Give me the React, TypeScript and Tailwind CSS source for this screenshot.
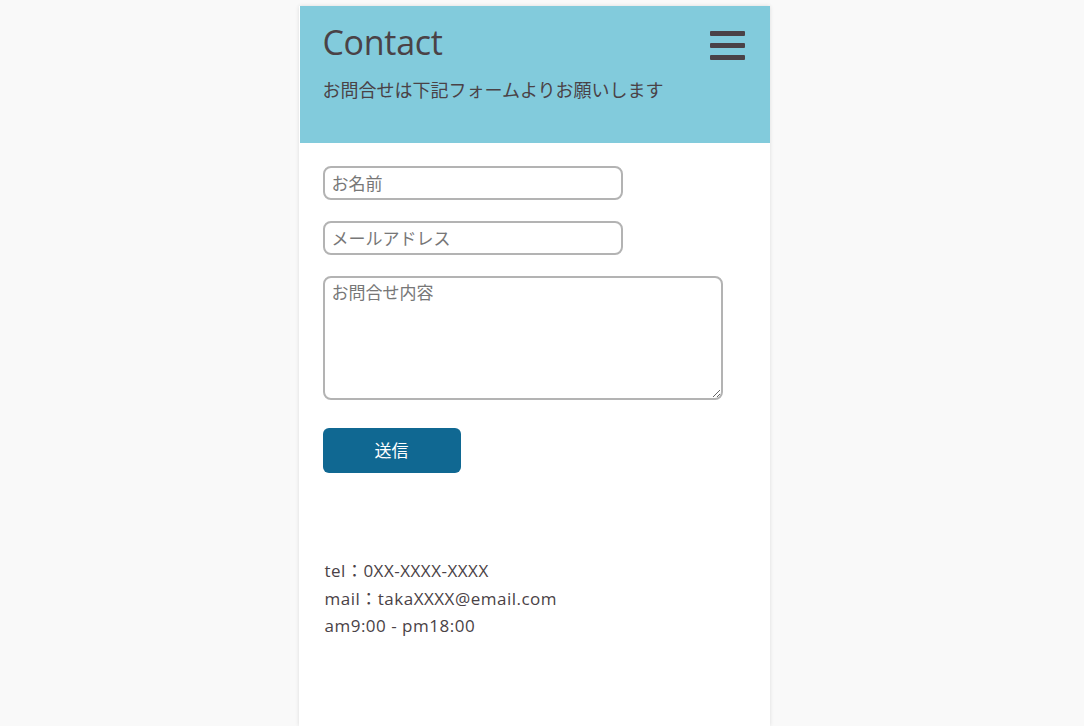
export default function App() {
  const font = { fontFamily: '"Open Sans", "Noto Sans CJK JP", sans-serif' };
  return (
    <div className="min-h-[726px] w-full bg-[#f9f9f9] pt-[6px]" style={font}>
      <div className="mx-auto flex min-h-[720px] w-[471px] translate-x-[-8px] flex-col bg-white pl-[1px] shadow-[0_0_4px_rgba(0,0,0,0.12)]">
        <header className="flex h-[137px] justify-between bg-[#82cbdc] pl-[23px] pr-[25px] text-[#4a4246]">
          <div>
            <h1 className="mt-[14px] text-[34px] leading-[44px] tracking-[-0.3px]">Contact</h1>
            <p className="mt-[13px] text-[18px] leading-[24px]" style={{ fontFamily: '"Noto Sans CJK JP", sans-serif' }}>
              お問合せは下記フォームよりお願いします
            </p>
          </div>
          <div className="mt-[25px] flex h-[29px] w-[35px] flex-col justify-between">
            <span className="h-[5px] w-full rounded-[1px] bg-[#4a4246]" />
            <span className="h-[5px] w-full rounded-[1px] bg-[#4a4246]" />
            <span className="h-[5px] w-full rounded-[1px] bg-[#4a4246]" />
          </div>
        </header>
        <form className="flex flex-col items-start px-[23px] pt-[23px]">
          <input
            placeholder="お名前"
            className="h-[34px] w-[300px] rounded-[8px] border-2 border-[#b3b3b3] px-[7px] text-[17px] text-[#4a4246] placeholder:text-[#777]"
          />
          <input
            placeholder="メールアドレス"
            className="mt-[21px] h-[34px] w-[300px] rounded-[8px] border-2 border-[#b3b3b3] px-[7px] text-[17px] text-[#4a4246] placeholder:text-[#777]"
          />
          <textarea
            placeholder="お問合せ内容"
            className="mt-[21px] h-[124px] w-[400px] rounded-[8px] border-2 border-[#b3b3b3] px-[7px] py-[3px] text-[17px] leading-[24px] text-[#4a4246] placeholder:text-[#777]"
          />
          <button
            type="button"
            className="mt-[28px] h-[45px] w-[138px] rounded-[6px] bg-[#106892] text-[17px] text-white"
          >
            送信
          </button>
        </form>
        <div className="mt-[84px] px-[25px] text-[17px] leading-[27.5px] tracking-[0.5px] text-[#4a4246]">
          <p>tel：0XX-XXXX-XXXX</p>
          <p>mail：takaXXXX@email.com</p>
          <p>am9:00 - pm18:00</p>
        </div>
      </div>
    </div>
  );
}
